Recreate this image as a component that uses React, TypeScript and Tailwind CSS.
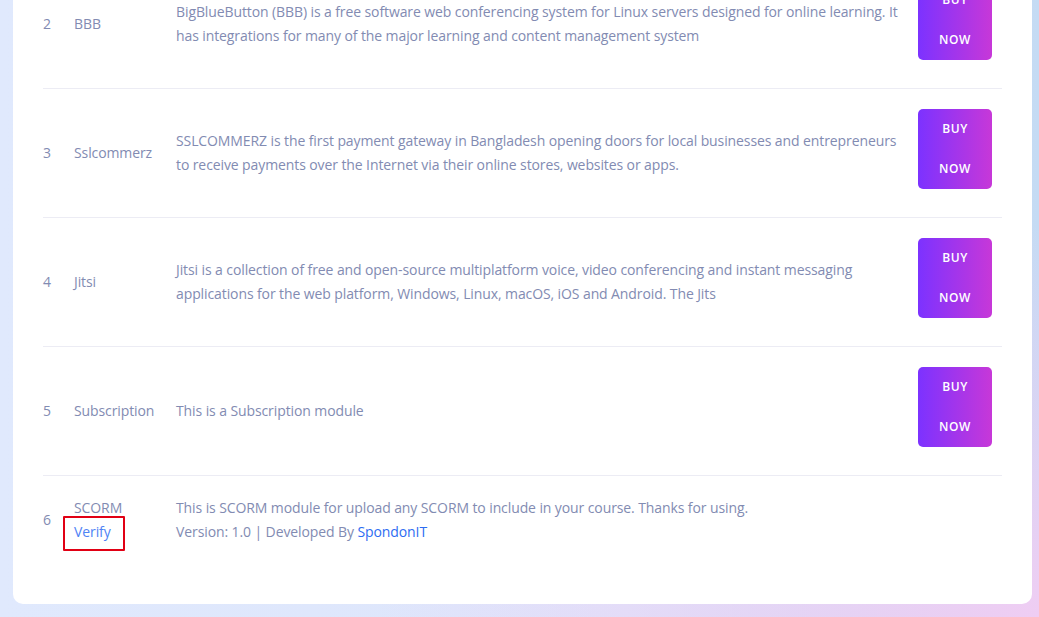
import React from "react";

const font = { fontFamily: '"Open Sans", "Noto Sans", sans-serif' };

type Row = {
  n: string;
  name: string;
  lines: string[];
  buy: boolean;
};

const rows: Row[] = [
  {
    n: "2",
    name: "BBB",
    lines: [
      "BigBlueButton (BBB) is a free software web conferencing system for Linux servers designed for online learning. It",
      "has integrations for many of the major learning and content management system",
    ],
    buy: true,
  },
  {
    n: "3",
    name: "Sslcommerz",
    lines: [
      "SSLCOMMERZ is the first payment gateway in Bangladesh opening doors for local businesses and entrepreneurs",
      "to receive payments over the Internet via their online stores, websites or apps.",
    ],
    buy: true,
  },
  {
    n: "4",
    name: "Jitsi",
    lines: [
      "Jitsi is a collection of free and open-source multiplatform voice, video conferencing and instant messaging",
      "applications for the web platform, Windows, Linux, macOS, iOS and Android. The Jits",
    ],
    buy: true,
  },
  {
    n: "5",
    name: "Subscription",
    lines: ["This is a Subscription module"],
    buy: true,
  },
];

function BuyButton() {
  return (
    <button className="w-[74px] h-[80px] rounded-[5px] bg-[linear-gradient(to_right,#7c32ff,#c738d8)] text-white text-[12px] font-semibold uppercase tracking-[0.6px] leading-[40px] text-center">
      <span className="block">Buy</span>
      <span className="block">Now</span>
    </button>
  );
}

export default function App() {
  return (
    <div
      className="h-[617px] w-[1039px] overflow-hidden flex flex-col justify-end pl-[13px] pr-[7px] pb-[13px] bg-[radial-gradient(ellipse_at_100%_100%,#efcdf3_0%,rgba(239,205,243,0)_45%),linear-gradient(to_right,#e0e9fd_0%,#dde5fb_60%,#c5dbf4_100%)]"
      style={font}
    >
      <div className="bg-white rounded-b-[10px] px-[30px] pb-[40px] text-[#828bb2] text-[14px] tracking-[-0.1px]">
        {rows.map((r) => (
          <div
            key={r.n}
            className="grid grid-cols-[31px_102px_742px_84px] border-b border-[#ececf4]"
          >
            <div className="flex items-center leading-[24px]">{r.n}</div>
            <div className="flex items-center leading-[24px]">{r.name}</div>
            <div className="flex flex-col justify-center leading-[24px]">
              {r.lines.map((l, i) => (
                <span key={i} className="block whitespace-nowrap">
                  {l}
                </span>
              ))}
            </div>
            <div className="pt-[20px] pb-[28px]">{r.buy && <BuyButton />}</div>
          </div>
        ))}
        <div className="grid grid-cols-[31px_102px_742px_84px] py-[20px]">
          <div className="flex items-center leading-[24px]">6</div>
          <div className="flex flex-col leading-[24px]">
            <span>SCORM</span>
            <span className="relative self-start">
              <a href="#" className="text-[#4f83f5]">
                Verify
              </a>
              <span className="absolute left-[-11px] top-[-4px] w-[62px] h-[35px] border-2 border-[#e10014] rounded-[1px]" />
            </span>
          </div>
          <div className="flex flex-col leading-[24px]">
            <span>This is SCORM module for upload any SCORM to include in your course. Thanks for using.</span>
            <span>
              Version: 1.0 | Developed By{" "}
              <a href="#" className="text-[#2d6cf2]">
                SpondonIT
              </a>
            </span>
          </div>
          <div />
        </div>
      </div>
    </div>
  );
}
